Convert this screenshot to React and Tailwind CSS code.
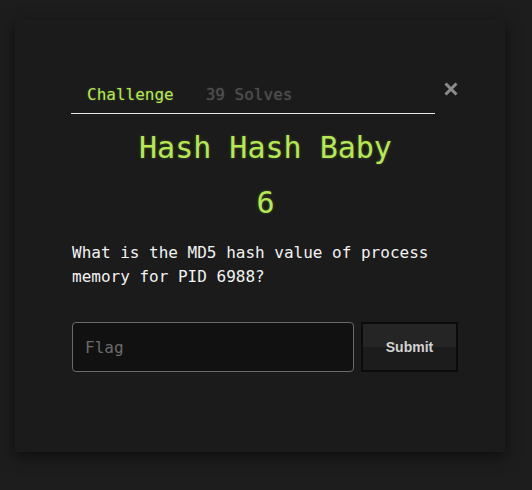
export default function App() {
  const mono = { fontFamily: '"DejaVu Sans Mono", "Liberation Mono", monospace' };

  return (
    <div className="min-h-[490px] w-[532px] bg-[#1d1d1d] pt-[20px] pl-[15px]" style={mono}>
      <div className="w-[490px] h-[432px] bg-[#1b1b1b] shadow-[0_4px_14px_rgba(0,0,0,0.55)] pl-[56px] pr-[46px] pt-[55px]">
        {/* header: tabs + close */}
        <div className="flex items-start">
          <div className="flex-1 flex border-b border-[#e6e6e6]">
            <div className="px-4 pt-2 pb-[6px] text-[16px] leading-6 text-[#b5e853] [text-shadow:0_0_2px_rgba(181,232,83,0.3)]">
              Challenge
            </div>
            <div className="px-4 pt-2 pb-[6px] text-[16px] leading-6 text-[#505050] [text-shadow:0_0_2px_rgba(100,100,100,0.4)]">
              39 Solves
            </div>
          </div>
          <button className="ml-[8px] mt-[6px] w-[16px] h-[16px] flex items-center justify-center">
            <svg width="16" height="16" viewBox="0 0 16 16">
              <path d="M2.5 2.5 L13.5 13.5 M13.5 2.5 L2.5 13.5" stroke="#8c8c8c" strokeWidth="3" strokeLinecap="butt" />
            </svg>
          </button>
        </div>

        {/* body */}
        <div className="pl-[1px]">
          <h1 className="mt-[16px] text-center text-[30px] leading-9 text-[#b5e853] [text-shadow:0_0_3px_rgba(181,232,83,0.3)]">
            Hash Hash Baby
          </h1>
          <div className="mt-[19px] text-center text-[30px] leading-9 text-[#b5e853] [text-shadow:0_0_3px_rgba(181,232,83,0.3)]">
            6
          </div>
          <p className="mt-[20px] text-[16px] leading-6 text-[#f2f2f2]">
            What is the MD5 hash value of process memory for PID 6988?
          </p>

          <div className="mt-[33px] flex gap-[7px]">
            <input
              placeholder="Flag"
              className="w-[282px] h-[50px] rounded-[4px] border border-[#6a6a6a] bg-[#111111] px-3 text-[16px] text-[#ddd] placeholder-[#6b6b6b] outline-none"
              style={mono}
            />
            <button
              className="w-[97px] h-[50px] border-2 border-[#0b0b0b] bg-[linear-gradient(#252525_50%,#1c1c1c_50%)] text-[14px] font-bold text-[#d2d2d2]"
              style={{ fontFamily: '"Liberation Sans", Arial, sans-serif' }}
            >
              Submit
            </button>
          </div>
        </div>
      </div>
    </div>
  );
}
